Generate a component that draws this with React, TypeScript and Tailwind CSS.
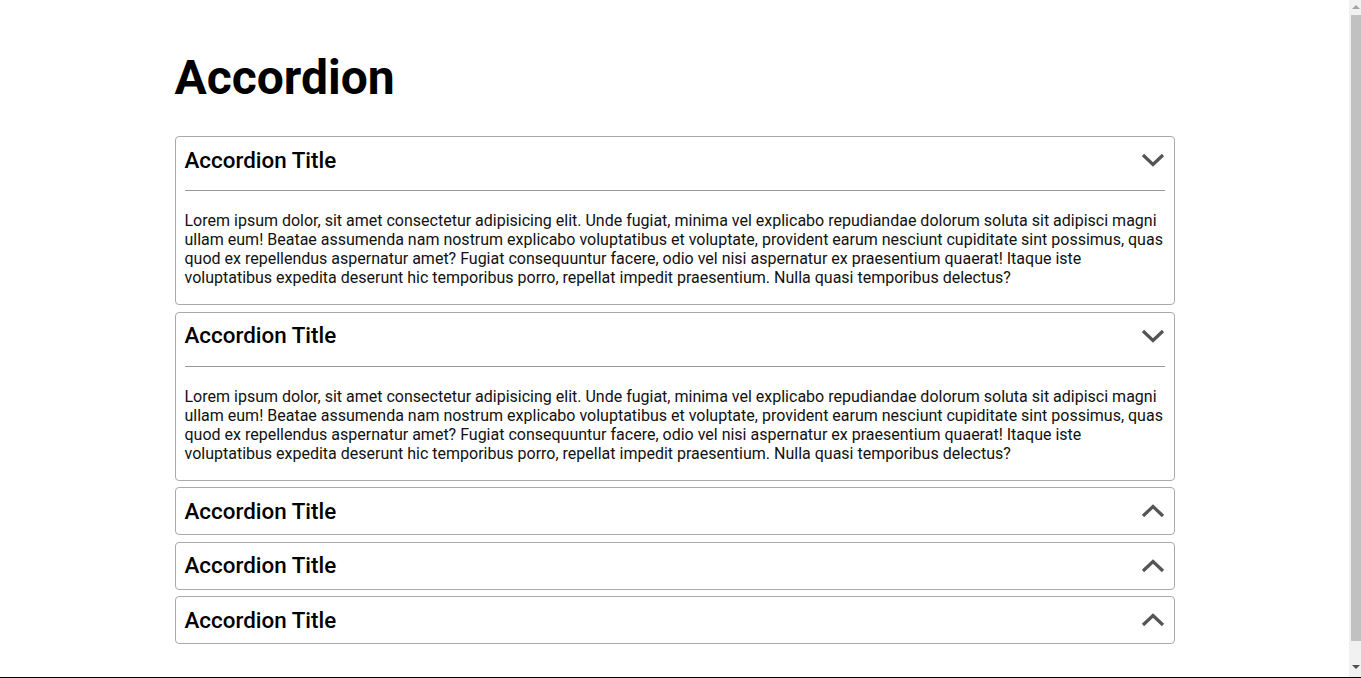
import React, { useState } from 'react';

const LOREM =
  'Lorem ipsum dolor, sit amet consectetur adipisicing elit. Unde fugiat, minima vel explicabo repudiandae dolorum soluta sit adipisci magni ullam eum! Beatae assumenda nam nostrum explicabo voluptatibus et voluptate, provident earum nesciunt cupiditate sint possimus, quas quod ex repellendus aspernatur amet? Fugiat consequuntur facere, odio vel nisi aspernatur ex praesentium quaerat! Itaque iste voluptatibus expedita deserunt hic temporibus porro, repellat impedit praesentium. Nulla quasi temporibus delectus?';

const Chevron: React.FC<{ up?: boolean }> = ({ up }) => (
  <svg width="24" height="14" viewBox="0 0 24 14" className="text-[#555]">
    <polyline
      points={up ? '2,12 12,2.5 22,12' : '2,2 12,11.5 22,2'}
      fill="none"
      stroke="currentColor"
      strokeWidth="3.2"
      strokeLinejoin="miter"
    />
  </svg>
);

interface ItemProps {
  title: string;
  body: string;
  open: boolean;
  onToggle: () => void;
}

const AccordionItem: React.FC<ItemProps> = ({ title, body, open, onToggle }) => (
  <div className="rounded-[4px] border border-[#aaa] bg-white px-[9px]">
    <button
      type="button"
      onClick={onToggle}
      className="flex h-[46px] w-full items-center justify-between text-left"
    >
      <h2 className="mt-[1px] text-[22.4px] font-medium leading-normal text-black">{title}</h2>
      <Chevron up={!open} />
    </button>
    {open && (
      <div className="pb-[17px]">
        <div className="mt-[7px] h-px bg-[#999]" />
        <p className="mt-[20px] text-[16px] leading-[19px] text-[#111]">{body}</p>
      </div>
    )}
  </div>
);

// the browser's scrollbar in the screenshot, drawn over the page edge
const FakeScrollbar: React.FC = () => (
  <div className="fixed right-0 top-0 h-[677px] w-[12px] bg-[#f1f1f1]">
    <div className="absolute left-[3px] top-[5px] h-0 w-0 border-x-[4px] border-b-[4px] border-x-transparent border-b-[#a3a3a3]" />
    <div className="absolute left-[2px] right-0 top-[15px] h-[626px] bg-[#c1c1c1]" />
    <div className="absolute bottom-[8px] left-[3px] h-0 w-0 border-x-[4px] border-t-[4px] border-x-transparent border-t-[#505050]" />
  </div>
);

export default function App() {
  const [open, setOpen] = useState<boolean[]>([true, true, false, false, false]);

  const toggle = (i: number) =>
    setOpen(prev => prev.map((v, j) => (j === i ? !v : v)));

  return (
    <div className="min-h-screen bg-white pb-[40px]" style={{ fontFamily: 'Roboto, "Liberation Sans", sans-serif' }}>
      <div className="w-[1349px]">
        <div className="mx-auto w-[1000px] pt-[42px]">
          <h1 className="mb-[22px] text-[48px] font-bold leading-normal text-black">Accordion</h1>
          <div className="flex flex-col gap-[6.5px]">
            {open.map((isOpen, i) => (
              <AccordionItem
                key={i}
                title="Accordion Title"
                body={LOREM}
                open={isOpen}
                onToggle={() => toggle(i)}
              />
            ))}
          </div>
        </div>
      </div>
      <FakeScrollbar />
      <div className="fixed bottom-0 left-0 h-px w-full bg-black" />
    </div>
  );
}
